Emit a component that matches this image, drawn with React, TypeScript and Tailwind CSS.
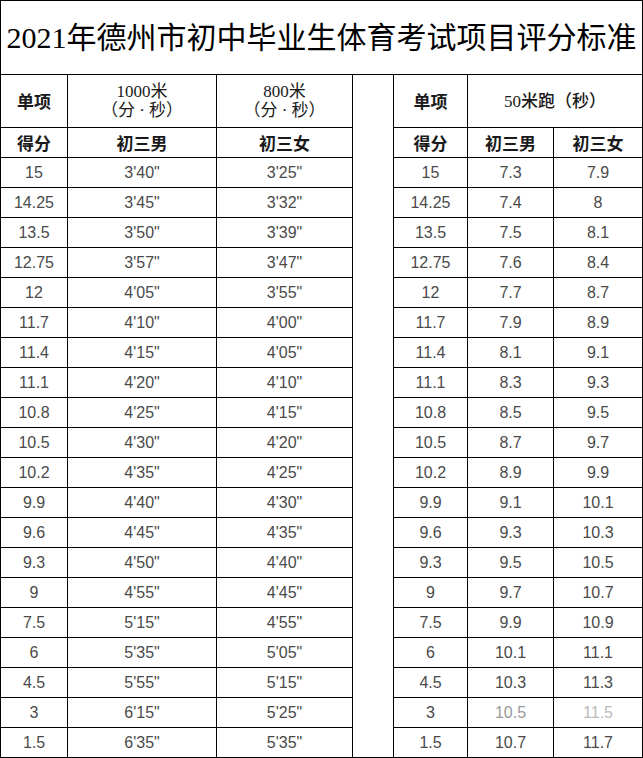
import React from "react";

const rows: [string, string, string, string, string][] = [
  ["15", "3'40\"", "3'25\"", "7.3", "7.9"],
  ["14.25", "3'45\"", "3'32\"", "7.4", "8"],
  ["13.5", "3'50\"", "3'39\"", "7.5", "8.1"],
  ["12.75", "3'57\"", "3'47\"", "7.6", "8.4"],
  ["12", "4'05\"", "3'55\"", "7.7", "8.7"],
  ["11.7", "4'10\"", "4'00\"", "7.9", "8.9"],
  ["11.4", "4'15\"", "4'05\"", "8.1", "9.1"],
  ["11.1", "4'20\"", "4'10\"", "8.3", "9.3"],
  ["10.8", "4'25\"", "4'15\"", "8.5", "9.5"],
  ["10.5", "4'30\"", "4'20\"", "8.7", "9.7"],
  ["10.2", "4'35\"", "4'25\"", "8.9", "9.9"],
  ["9.9", "4'40\"", "4'30\"", "9.1", "10.1"],
  ["9.6", "4'45\"", "4'35\"", "9.3", "10.3"],
  ["9.3", "4'50\"", "4'40\"", "9.5", "10.5"],
  ["9", "4'55\"", "4'45\"", "9.7", "10.7"],
  ["7.5", "5'15\"", "4'55\"", "9.9", "10.9"],
  ["6", "5'35\"", "5'05\"", "10.1", "11.1"],
  ["4.5", "5'55\"", "5'15\"", "10.3", "11.3"],
  ["3", "6'15\"", "5'25\"", "10.5", "11.5"],
  ["1.5", "6'35\"", "5'35\"", "10.7", "11.7"],
];

const cell = "border border-black text-center align-middle p-0";
const head =
  "border border-black text-center align-middle p-0 font-bold text-[17px] text-[#1a1a1a] font-['Noto_Sans_CJK_SC',sans-serif]";
const serif =
  "border border-black text-center align-middle p-0 text-[17px] leading-[19px] text-[#1a1a1a] font-['Liberation_Serif','Noto_Sans_CJK_SC',serif]";
const num = "text-[16px] text-[#4a4a4a] font-['Liberation_Sans',Arial,sans-serif]";

export default function App() {
  return (
    <div className="w-[643px] h-[758px] bg-white overflow-hidden">
      <table className="w-[642px] table-fixed border-collapse">
        <colgroup>
          <col className="w-[67px]" />
          <col className="w-[149px]" />
          <col className="w-[136px]" />
          <col className="w-[41px]" />
          <col className="w-[74px]" />
          <col className="w-[86px]" />
          <col className="w-[89px]" />
        </colgroup>
        <tbody>
          <tr className="h-[74px]">
            <td
              colSpan={7}
              className="border border-black text-center align-middle p-0 text-[30px] text-black whitespace-nowrap font-['Liberation_Serif','Noto_Sans_CJK_SC',serif]"
            >
              2021年德州市初中毕业生体育考试项目评分标准
            </td>
          </tr>
          <tr className="h-[53px]">
            <td className={head}>单项</td>
            <td className={serif}>
              1000米
              <br />
              （分 · 秒）
            </td>
            <td className={serif}>
              800米
              <br />
              （分 · 秒）
            </td>
            <td rowSpan={22} className={cell}></td>
            <td className={head}>单项</td>
            <td colSpan={2} className={serif + " font-medium"}>
              50米跑（秒）
            </td>
          </tr>
          <tr className="h-[30px]">
            <td className={head}>得分</td>
            <td className={head}>初三男</td>
            <td className={head}>初三女</td>
            <td className={head}>得分</td>
            <td className={head}>初三男</td>
            <td className={head}>初三女</td>
          </tr>
          {rows.map((r, i) => {
            const faded = r[0] === "3";
            return (
              <tr key={i} className="h-[30px]">
                <td className={`${cell} ${num}`}>{r[0]}</td>
                <td className={`${cell} ${num}`}>{r[1]}</td>
                <td className={`${cell} ${num}`}>{r[2]}</td>
                <td className={`${cell} ${num}`}>{r[0]}</td>
                <td
                  className={`${cell} ${num} ${faded ? "text-[#999]" : ""}`}
                >
                  {r[3]}
                </td>
                <td
                  className={`${cell} ${num} ${faded ? "text-[#bbb] border-l-[#ccc]" : ""}`}
                >
                  {r[4]}
                </td>
              </tr>
            );
          })}
        </tbody>
      </table>
    </div>
  );
}
